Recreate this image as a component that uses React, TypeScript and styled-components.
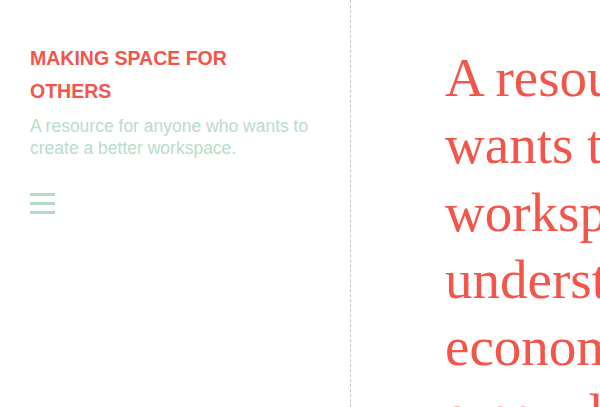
import React from "react";
import styled, { createGlobalStyle } from "styled-components";

const GlobalStyle = createGlobalStyle`
  html, body {
    margin: 0;
    padding: 0;
    background: #ffffff;
    overflow: hidden;
  }
`;

const Page = styled.div`
  display: flex;
  width: 600px;
  height: 407px;
  overflow: hidden;
`;

const Sidebar = styled.aside`
  flex: 0 0 351px;
  box-sizing: border-box;
  padding: 42px 30px 0 30px;
  border-right: 1px dashed #c4c4c4;
  font-family: "Liberation Sans", Arial, sans-serif;
`;

const Title = styled.h1`
  margin: 0;
  max-width: 260px;
  font-size: 19.5px;
  line-height: 33px;
  font-weight: 700;
  text-transform: uppercase;
  color: #f2554a;
`;

const Tagline = styled.p`
  margin: 7px 0 0 0;
  font-size: 17.5px;
  line-height: 22px;
  color: #b9dccb;
`;

const MenuButton = styled.button`
  display: flex;
  flex-direction: column;
  gap: 6px;
  margin-top: 34px;
  padding: 0;
  border: none;
  background: none;
  cursor: pointer;
`;

const MenuBar = styled.span`
  display: block;
  width: 25px;
  height: 3px;
  background: #b5dbc7;
`;

const Main = styled.main`
  flex: 1;
  min-width: 0;
  padding: 44px 0 0 94px;
  overflow: hidden;
`;

const Lead = styled.p`
  margin: 0;
  font-family: "Liberation Serif", "Times New Roman", serif;
  font-size: 55px;
  line-height: 67.25px;
  color: #f2554a;
  white-space: nowrap;
`;

const leadLines = [
  "A resource for anyone who",
  "wants to create a better",
  "workspace, and anyone who",
  "understands the social and",
  "economic value of a place",
  "a new look at how we work.",
];

export default function App() {
  return (
    <>
      <GlobalStyle />
      <Page>
        <Sidebar>
          <Title>Making Space for Others</Title>
          <Tagline>A resource for anyone who wants to create a better workspace.</Tagline>
          <MenuButton aria-label="Menu">
            <MenuBar />
            <MenuBar />
            <MenuBar />
          </MenuButton>
        </Sidebar>
        <Main>
          <Lead>
            {leadLines.map((line, i) => (
              <React.Fragment key={i}>
                {line}
                {i < leadLines.length - 1 && <br />}
              </React.Fragment>
            ))}
          </Lead>
        </Main>
      </Page>
    </>
  );
}
